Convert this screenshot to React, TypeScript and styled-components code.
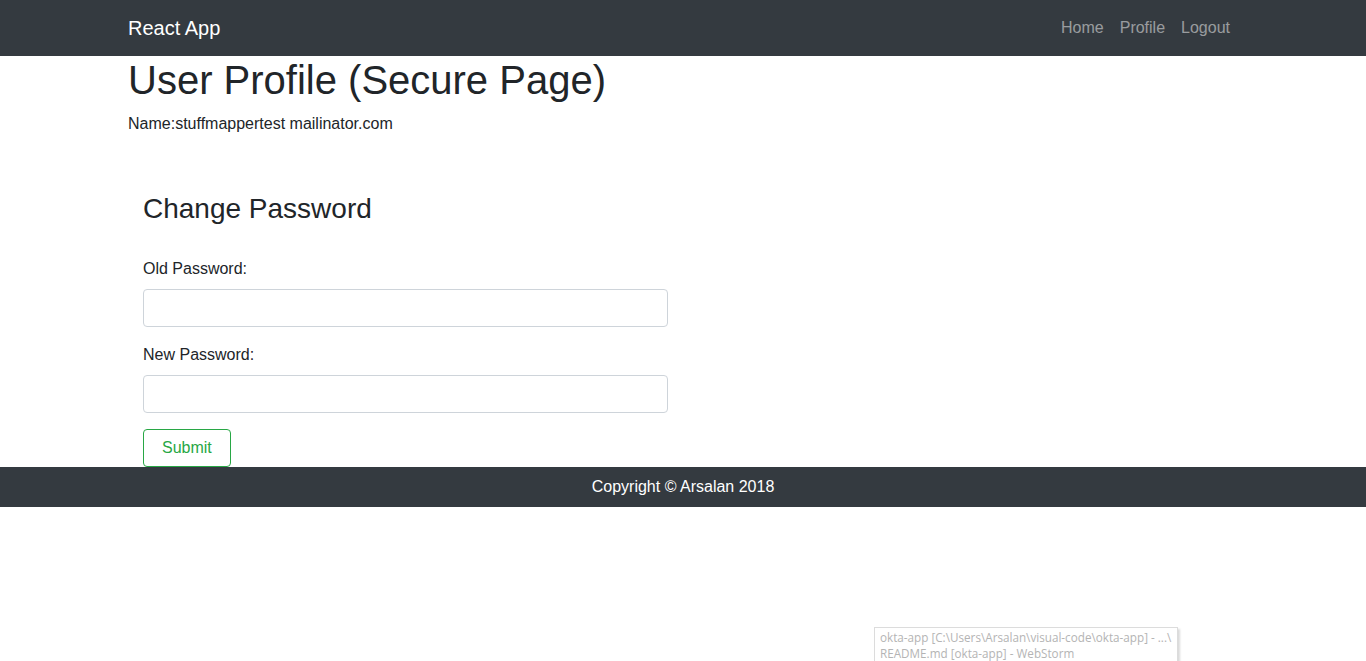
import React from "react";
import styled, { createGlobalStyle } from "styled-components";

const Global = createGlobalStyle`
  * { box-sizing: border-box; }
  html, body { margin: 0; padding: 0; background: #fff; }
  body {
    font-family: "Liberation Sans", Arial, sans-serif;
    font-size: 16px;
    line-height: 1.5;
    color: #212529;
  }
`;

const Page = styled.div`
  position: relative;
  height: 661px;
  overflow: hidden;
`;

const NavBar = styled.nav`
  background: #343a40;
  height: 56px;
`;

const Container = styled.div`
  width: 1140px;
  margin: 0 auto;
  padding: 0 15px;
`;

const NavInner = styled(Container)`
  height: 100%;
  display: flex;
  align-items: center;
  justify-content: space-between;
`;

const Brand = styled.a`
  color: #fff;
  font-size: 20px;
  line-height: 30px;
  text-decoration: none;
`;

const NavLinks = styled.div`
  display: flex;
`;

const NavLink = styled.a`
  color: rgba(255, 255, 255, 0.5);
  padding: 8px;
  text-decoration: none;
  line-height: 24px;
`;

const Title = styled.h1`
  font-size: 40px;
  font-weight: 400;
  line-height: 1.2;
  margin: 0 0 8px;
`;

const NameLine = styled.p`
  margin: 0 0 16px;
`;

const FormCard = styled.div`
  padding: 40px 15px 0;
  width: 555px;
`;

const SubTitle = styled.h3`
  font-size: 28px;
  font-weight: 400;
  line-height: 1.2;
  margin: 0 0 31px;
`;

const Group = styled.div`
  margin-bottom: 16px;
`;

const Label = styled.label`
  display: block;
  margin-bottom: 8px;
`;

const Input = styled.input`
  display: block;
  width: 525px;
  height: 38px;
  border: 1px solid #ced4da;
  border-radius: 4px;
  padding: 6px 12px;
  font-size: 16px;
  font-family: inherit;
  outline: none;
`;

const Button = styled.button`
  display: block;
  height: 38px;
  padding: 6px 18px;
  font-size: 16px;
  font-family: inherit;
  line-height: 24px;
  color: #28a745;
  background: transparent;
  border: 1px solid #28a745;
  border-radius: 4px;
`;

const Footer = styled.footer`
  background: #343a40;
  color: #fff;
  height: 40px;
  display: flex;
  align-items: center;
  justify-content: center;
`;

const Tooltip = styled.div`
  position: absolute;
  left: 874px;
  top: 627px;
  width: 304px;
  height: 40px;
  border: 1px solid #dcdcdc;
  background: #fff;
  box-shadow: 2px 2px 2px rgba(0, 0, 0, 0.15);
  padding: 1px 5px;
  font-family: "Open Sans", "Noto Sans", sans-serif;
  font-size: 11.7px;
  line-height: 16px;
  color: #b4b4b4;
  white-space: nowrap;
`;

export default function App() {
  return (
    <Page>
      <Global />
      <NavBar>
        <NavInner>
          <Brand>React App</Brand>
          <NavLinks>
            <NavLink>Home</NavLink>
            <NavLink>Profile</NavLink>
            <NavLink>Logout</NavLink>
          </NavLinks>
        </NavInner>
      </NavBar>
      <Container>
        <Title>User Profile (Secure Page)</Title>
        <NameLine>Name:stuffmappertest mailinator.com</NameLine>
        <FormCard>
          <SubTitle>Change Password</SubTitle>
          <Group>
            <Label>Old Password:</Label>
            <Input type="password" />
          </Group>
          <Group>
            <Label>New Password:</Label>
            <Input type="password" />
          </Group>
          <Button>Submit</Button>
        </FormCard>
      </Container>
      <Footer>Copyright © Arsalan 2018</Footer>
      <Tooltip>
        <div>okta-app [C:\Users\Arsalan\visual-code\okta-app] - ...\</div>
        <div>README.md [okta-app] - WebStorm</div>
      </Tooltip>
    </Page>
  );
}
